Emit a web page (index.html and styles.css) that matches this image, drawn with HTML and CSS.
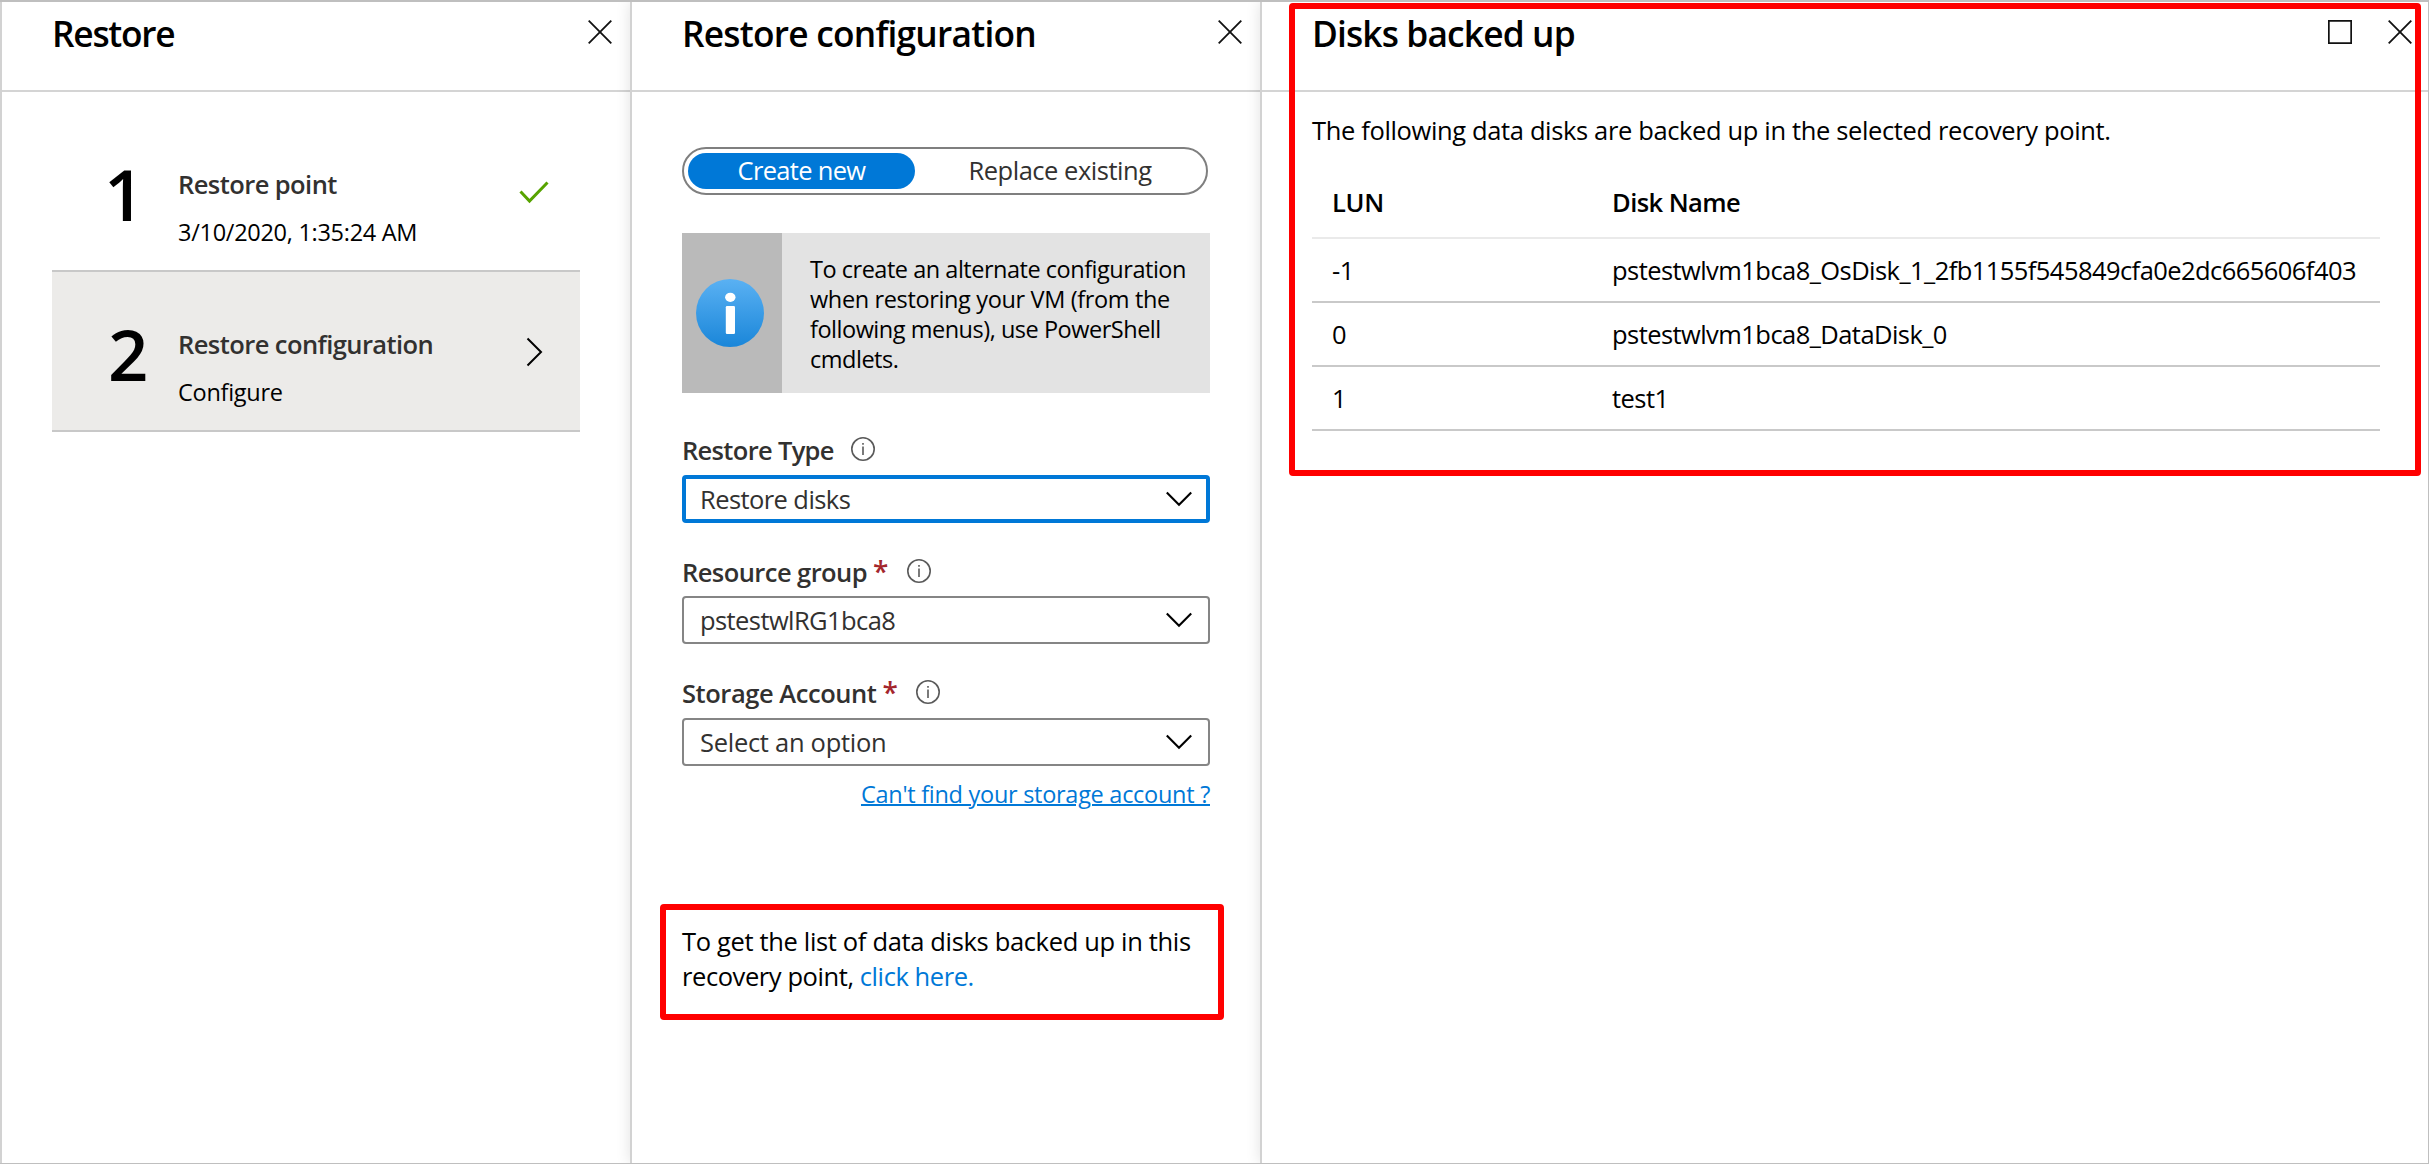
FILE: index.html
```html
<!DOCTYPE html>
<html lang="en">
<head>
<meta charset="utf-8">
<title>Restore</title>
<link rel="stylesheet" href="styles.css">
</head>
<body>
<div class="portal">
  <section class="blade blade-restore">
    <header class="blade-header">
      <h1 class="blade-title title-restore">Restore</h1>
      <svg class="icon-window" viewBox="0 0 24 24"><path d="M.7.7 23.3 23.3M23.3.7.7 23.3"/></svg>
    </header>
    <div class="steps">
      <div class="step">
        <span class="step-number number-one">1</span>
        <div class="step-text">
          <div class="step-title">Restore point</div>
          <div class="step-sub">3/10/2020, 1:35:24 AM</div>
        </div>
        <svg class="step-icon icon-check" viewBox="0 0 32 32"><path d="M2.5 15.5 11.5 25 29.5 6.5"/></svg>
      </div>
      <div class="step step-active">
        <span class="step-number">2</span>
        <div class="step-text">
          <div class="step-title">Restore configuration</div>
          <div class="step-sub">Configure</div>
        </div>
        <svg class="step-icon" viewBox="0 0 32 32"><path d="M9.5 2.5 23 16 9.5 29.5"/></svg>
      </div>
    </div>
  </section>

  <section class="blade blade-config">
    <header class="blade-header">
      <h1 class="blade-title">Restore configuration</h1>
      <svg class="icon-window" viewBox="0 0 24 24"><path d="M.7.7 23.3 23.3M23.3.7.7 23.3"/></svg>
    </header>
    <div class="config-body">
      <div class="toggle">
        <span class="toggle-option toggle-selected">Create new</span>
        <span class="toggle-option toggle-other">Replace existing</span>
      </div>
      <div class="notice">
        <div class="notice-icon">
          <svg width="68" height="68" viewBox="0 0 68 68">
            <defs><linearGradient id="blue" x1="0" y1="0" x2="0" y2="1"><stop offset="0" stop-color="#5ab1f3"/><stop offset="1" stop-color="#1a86d9"/></linearGradient></defs>
            <circle cx="34" cy="34" r="34" fill="url(#blue)"/>
            <ellipse cx="34.3" cy="18.3" rx="5.2" ry="4.6" fill="#fff"/>
            <rect x="29.8" y="27" width="9.2" height="28" rx="1.2" fill="#fff"/>
          </svg>
        </div>
        <p class="notice-text"><span class="tight">To create an alternate configuration</span><br>when restoring your VM (from the<br><span class="tight">following menus), use PowerShell</span><br><span class="tight">cmdlets.</span></p>
      </div>

      <div class="field">
        <div class="field-label"><span class="label-type">Restore Type</span>
          <svg class="icon-info" viewBox="0 0 24 24"><circle cx="12" cy="12" r="11.2"/><path d="M12 9.6V18M12 6V7.8"/></svg>
        </div>
        <div class="select select-focus"><span class="select-value">Restore disks</span><svg class="icon-down" viewBox="0 0 26 16"><path d="M.8 1.5 13 13.8 25.2 1.5"/></svg></div>
      </div>
      <div class="field field-group">
        <div class="field-label"><span class="label-group">Resource group</span><span class="required">*</span>
          <svg class="icon-info" viewBox="0 0 24 24"><circle cx="12" cy="12" r="11.2"/><path d="M12 9.6V18M12 6V7.8"/></svg>
        </div>
        <div class="select"><span class="select-value">pstestwlRG1bca8</span><svg class="icon-down" viewBox="0 0 26 16"><path d="M.8 1.5 13 13.8 25.2 1.5"/></svg></div>
      </div>
      <div class="field">
        <div class="field-label"><span class="label-storage">Storage Account</span><span class="required">*</span>
          <svg class="icon-info" viewBox="0 0 24 24"><circle cx="12" cy="12" r="11.2"/><path d="M12 9.6V18M12 6V7.8"/></svg>
        </div>
        <div class="select"><span class="select-value placeholder">Select an option</span><svg class="icon-down" viewBox="0 0 26 16"><path d="M.8 1.5 13 13.8 25.2 1.5"/></svg></div>
      </div>
      <a class="storage-link">Can't find your storage account ?</a>
      <p class="disk-list-note">To get the list of data disks backed up in this<br><span class="note-second">recovery point, <a class="link">click here.</a></span></p>
    </div>
    <div class="highlight highlight-note"></div>
  </section>

  <section class="blade blade-disks">
    <header class="blade-header">
      <h1 class="blade-title title-disks">Disks backed up</h1>
      <svg class="icon-window icon-maximize" viewBox="0 0 24 24"><path d="M.8.8H23.2V23.2H.8Z"/></svg>
      <svg class="icon-window" viewBox="0 0 24 24"><path d="M.7.7 23.3 23.3M23.3.7.7 23.3"/></svg>
    </header>
    <div class="disks-body">
      <p class="disks-intro">The following data disks are backed up in the selected recovery point.</p>
      <div class="disk-table">
        <div class="disk-row disk-head"><span class="lun">LUN</span><span>Disk Name</span></div>
        <div class="disk-row"><span>-1</span><span>pstestwlvm1bca8_OsDisk_1_2fb1155f545849cfa0e2dc665606f403</span></div>
        <div class="disk-row"><span>0</span><span>pstestwlvm1bca8_DataDisk_0</span></div>
        <div class="disk-row"><span>1</span><span>test1</span></div>
      </div>
    </div>
    <div class="highlight highlight-disks"></div>
  </section>
</div>
</body>
</html>
```
FILE: styles.css
```css
* { box-sizing: border-box; }

body {
  margin: 0;
  background: #fff;
  color: #000;
  font-family: "Open Sans", "Noto Sans", sans-serif;
  font-size: 25.5px;
  letter-spacing: -0.36px;
}

h1, p { margin: 0; }

svg { display: block; flex: none; fill: none; }

.portal {
  display: grid;
  grid-template-columns: 630px 630px 1fr;
  height: 1164px;
  border-top: 2px solid #bfbfbf;
  border-right: 1px solid #bfbfbf;
  border-bottom: 1px solid #bfbfbf;
  overflow: hidden;
}

.blade {
  position: relative;
  min-width: 0;
  background: #fff;
  border-left: 2px solid #d2d2d2;
}

.blade-config, .blade-disks { box-shadow: 0 0 14px rgba(0, 0, 0, 0.12); }

/* Blade header */
.blade-header {
  display: flex;
  align-items: flex-start;
  height: 90px;
  padding: 11px 18px 0 50px;
  border-bottom: 2px solid #d4d4d4;
}

.blade-disks .blade-header { padding-right: 16px; }

.blade-title {
  flex: 1;
  font-size: 35.3px;
  font-weight: 600;
  line-height: 40px;
  letter-spacing: -0.76px;
}

.title-restore { letter-spacing: -1.25px; }
.title-disks { letter-spacing: -0.85px; }

.icon-window {
  width: 24px;
  height: 24px;
  margin-top: 7px;
  stroke: #111;
  stroke-width: 1.8;
}

.icon-maximize { margin-right: 36px; }

/* Wizard steps */
.steps { padding: 20px 50px 0; }

.step {
  display: flex;
  align-items: flex-start;
  height: 160px;
  padding: 0 30px 0 56px;
  border-bottom: 2px solid #c8c8c8;
}

.step-active { background: #ecebe9; }

.step-number {
  width: 70px;
  margin-top: 46px;
  font-size: 70.6px;
  font-weight: 600;
  line-height: 72px;
}

.number-one { margin-left: -4px; width: 74px; }

.step-text { flex: 1; margin-top: 54px; }

.step-title {
  color: #323130;
  font-weight: 600;
  line-height: 36px;
  letter-spacing: -0.57px;
}

.step-sub {
  margin-top: 14px;
  font-size: 23.5px;
  line-height: 32px;
  letter-spacing: -0.28px;
}

.step-icon {
  width: 32px;
  height: 32px;
  margin-top: 64px;
  stroke: #000;
  stroke-width: 2;
}

.icon-check { stroke: #57a300; stroke-width: 3; }

/* Configuration form */
.config-body {
  display: flex;
  flex-direction: column;
  padding: 55px 50px 0;
}

.toggle {
  display: flex;
  width: 526px;
  height: 48px;
  padding: 4px;
  border: 2px solid #7f7f7f;
  border-radius: 24px;
  color: #323130;
}

.toggle-option {
  flex: 1;
  line-height: 35px;
  text-align: center;
  letter-spacing: -0.48px;
}

.toggle-other { padding-left: 3px; }

.toggle-selected {
  flex: none;
  width: 227px;
  border-radius: 18px;
  background: #0078d7;
  color: #fff;
  letter-spacing: -0.68px;
}

.notice {
  display: flex;
  height: 160px;
  margin-top: 38px;
  background: #e3e3e3;
}

.notice-icon {
  width: 100px;
  padding: 46px 0 0 14px;
  background: #bababa;
}

.notice-text {
  padding: 21px 0 0 28px;
  font-size: 23.5px;
  line-height: 30px;
  white-space: nowrap;
}

.tight { letter-spacing: -0.48px; }

.field { margin-top: 36px; }
.notice + .field { margin-top: 44px; }

.field-label {
  display: flex;
  height: 38px;
  color: #323130;
  font-weight: 600;
  line-height: 26px;
}

.field-group .field-label { height: 37px; }

.label-type { letter-spacing: -0.68px; }
.label-group { letter-spacing: -0.56px; }
.label-storage { letter-spacing: -0.45px; }

.required {
  margin: -1px 0 0 6px;
  color: #a4262c;
  font-size: 28px;
}

.icon-info {
  width: 24px;
  height: 24px;
  margin-left: 19px;
  stroke: #5a5a5a;
  stroke-width: 1.6;
}

.label-type + .icon-info { margin-left: 17px; }

.select {
  display: flex;
  align-items: center;
  justify-content: space-between;
  height: 48px;
  padding: 0 16px;
  border: 2px solid #858585;
  border-radius: 4px;
  color: #323130;
}

.select-focus {
  padding: 0 14px;
  border: 4px solid #0078d7;
}

.select-value { letter-spacing: -0.58px; line-height: 44px; }
.placeholder { letter-spacing: -0.28px; }

.icon-down {
  width: 26px;
  height: 16px;
  stroke: #000;
  stroke-width: 2.1;
}

.storage-link {
  align-self: flex-end;
  margin-top: 12px;
  color: #0078d7;
  font-size: 23.5px;
  line-height: 32px;
  letter-spacing: -0.28px;
  text-decoration: underline;
  text-decoration-thickness: 2px;
}

.disk-list-note {
  margin-top: 114px;
  line-height: 35px;
  letter-spacing: -0.34px;
  white-space: nowrap;
}

.note-second { letter-spacing: -0.42px; }

.link { color: #0078d7; }

/* Disks table */
.disks-body { padding: 21px 48px 0 50px; }

.disks-intro { line-height: 35px; }

.disk-table { margin-top: 29px; }

.disk-row {
  display: grid;
  grid-template-columns: 280px 1fr;
  height: 64px;
  padding-left: 20px;
  border-bottom: 2px solid #c9c9c9;
  line-height: 62px;
  letter-spacing: -0.56px;
}

.disk-head {
  height: 62px;
  border-bottom-color: #eaeaea;
  font-weight: 600;
  line-height: 50px;
}

.lun { letter-spacing: -0.3px; }

/* Callout frames drawn over the blades */
.highlight {
  position: absolute;
  border: 6px solid #f00;
  border-radius: 4px;
  pointer-events: none;
}

.highlight-note {
  top: 902px;
  left: 28px;
  width: 564px;
  height: 116px;
}

.highlight-disks {
  top: 1px;
  left: 27px;
  width: 1132px;
  height: 473px;
}
```
